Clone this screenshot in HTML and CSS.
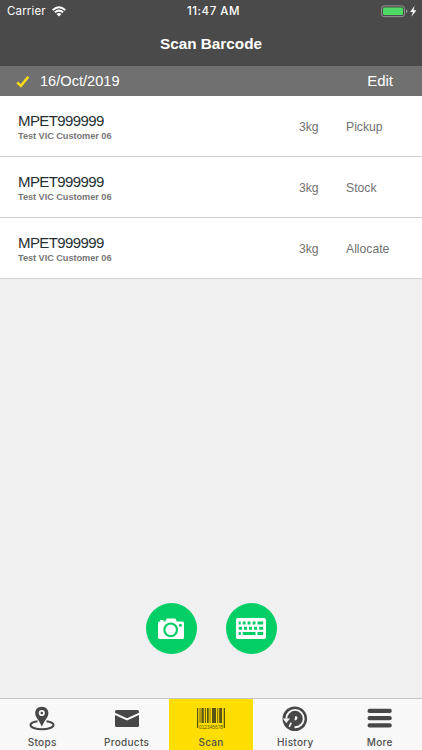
FILE: index.html
```html
<!DOCTYPE html>
<html lang="en">
<head>
<meta charset="utf-8">
<title>Scan Barcode</title>
<link rel="stylesheet" href="styles.css">
</head>
<body>
<div class="app">
  <header class="header">
    <div class="status">
      <div class="carrier"><span>Carrier</span>
        <svg width="14" height="11" viewBox="0 0 14 11" fill="#fff"><path d="M0 3.4Q7-3 14 3.4L12.7 4.8Q7-.4 1.3 4.8Z"/><path d="M2.2 5.7Q7 1.5 11.8 5.7L10.4 7.1Q7 4.2 3.6 7.1Z"/><path d="M4.5 8Q7 5.9 9.5 8L7 10.6Z"/></svg>
      </div>
      <div class="time">11:47 AM</div>
      <div class="battery">
        <svg width="36" height="13" viewBox="0 0 36 13"><rect x=".5" y=".9" width="23" height="10.7" rx="2.5" fill="none" stroke="#929292"/><rect x="2" y="2.4" width="20" height="7.7" rx="1" fill="#4cd964"/><path d="M25 4.5q1.5.3 1.5 1.8T25 8.1Z" fill="#929292"/><path d="M33.6.8L29.1 7H32L30.400 11.800L35.400 5.300H32.500Z" fill="#fff"/></svg>
      </div>
    </div>
    <h1 class="title">Scan Barcode</h1>
  </header>
  <div class="datebar">
    <svg class="check" width="14" height="13" viewBox="0 0 14 13"><path d="M1.200 7.300L4.900 10.900L12.300 1.700" fill="none" stroke="#fedd17" stroke-width="2.500"/></svg>
    <span class="date">16/Oct/2019</span>
    <span class="edit">Edit</span>
  </div>
  <main class="content">
    <ul class="list">
      <li class="row"><div class="item"><div class="code">MPET999999</div><div class="customer">Test VIC Customer 06</div></div><span class="weight">3kg</span><span class="kind">Pickup</span></li>
      <li class="row"><div class="item"><div class="code">MPET999999</div><div class="customer">Test VIC Customer 06</div></div><span class="weight">3kg</span><span class="kind">Stock</span></li>
      <li class="row"><div class="item"><div class="code">MPET999999</div><div class="customer">Test VIC Customer 06</div></div><span class="weight">3kg</span><span class="kind">Allocate</span></li>
    </ul>
    <div class="actions">
      <div class="round">
        <svg width="26" height="22" viewBox="0 0 26 22"><path d="M1.500 3.500H2.200V1.900H5.500V3.500H7.200L8.700.5H17.300L18.800 3.500H24.500Q26 3.500 26 5V19.500Q26 21 24.500 21H1.500Q0 21 0 19.500V5Q0 3.500 1.500 3.500Z" fill="#fff"/><circle cx="12.700" cy="11.800" r="6.300" fill="none" stroke="#04ce66" stroke-width="2.200"/><circle cx="22.400" cy="7.200" r="1.500" fill="#04ce66"/></svg>
      </div>
      <div class="round">
        <svg width="30" height="21" viewBox="0 0 30 21"><rect width="30" height="21" rx="1.800" fill="#fff"/><g fill="none" stroke="#04ce66" stroke-width="3"><path d="M2.700 4.900H4.800M6.700 4.900H9.600M11.600 4.900H14.500M16.600 4.900H19.500M21.500 4.900H27.200"/><path d="M2.700 10.200H6M8 10.200H11M13 10.200H16M18 10.200H21M23.200 10.200H27.200"/><path d="M2.700 15.500H4.800M6.700 15.500H19.500M21.500 15.500H27.200"/></g></svg>
      </div>
    </div>
  </main>
  <nav class="tabs">
    <div class="tab">
      <svg width="26" height="26" viewBox="0 0 26 26"><path d="M8.500 15.200C3.500 16 1.500 17.300 1.500 18.900C1.500 21.300 6.500 23.200 13 23.200S24.500 21.300 24.500 18.900C24.500 17.300 22.500 16 17.500 15.200" fill="none" stroke="#474747" stroke-width="2"/><path fill-rule="evenodd" d="M12.800.8C8.800.8 6.200 3.600 6.200 7.300C6.200 10.800 8.500 12.500 10.200 15.500L12.800 20.500L15.400 15.500C17.100 12.500 19.400 10.800 19.400 7.300C19.400 3.600 16.800.8 12.800.8ZM12.800 3.900A3.100 3.100 0 1 1 12.800 10.100A3.100 3.100 0 1 1 12.800 3.900Z" fill="#474747"/><circle cx="12.800" cy="7" r="1.300" fill="#474747"/></svg>
      <span>Stops</span>
    </div>
    <div class="tab">
      <svg width="26" height="26" viewBox="0 0 26 26" fill="#474747"><path d="M2.500 4H23.500Q25 4 25 5.500V6.800L13 12.200L1 6.800V5.500Q1 4 2.500 4Z"/><path d="M1 9L13 14.600L25 9V19.500Q25 21 23.500 21H2.500Q1 21 1 19.500Z"/></svg>
      <span>Products</span>
    </div>
    <div class="tab active">
      <svg width="30" height="26" viewBox="0 0 30 26"><path fill="#5c5417" d="M1 2h1.200v20H1zM3.600 2h.9v15h-.9zM5.500 2h2.300v15H5.500zM8.900 2h1v15h-1zM11 2h1.700v15H11zM13.700 2h.7v15h-.7zM16 2h4v15h-4zM21.300 2h.9v15h-.9zM23.200 2h2.800v15h-2.800zM27.700 2H29v20h-1.300z"/><text x="3" y="22.500" class="digits" textLength="24" lengthAdjust="spacingAndGlyphs">012345678</text></svg>
      <span>Scan</span>
    </div>
    <div class="tab">
      <svg width="26" height="26" viewBox="0 0 26 26" fill="none"><circle cx="12.800" cy="12.700" r="12.300" fill="#474747"/><path d="M4.300 12.700A8.700 8.700 0 1 1 12.500 21.300" stroke="#f8f8f8" stroke-width="1.900"/><path d="M.8 12.500H8L4.300 17.200Z" fill="#f8f8f8"/><path d="M9.300 16.600L7.200 20.800" stroke="#f8f8f8" stroke-width="1.600"/><path d="M13.100 10.300H14.200Q15.700 10.300 15.400 12Q15 14.500 12.500 14.500Z" fill="#f8f8f8"/></svg>
      <span>History</span>
    </div>
    <div class="tab">
      <svg width="26" height="26" viewBox="0 0 26 26"><path d="M2.600 4.900H22.700M2.600 12.200H22.700M2.600 19.400H22.700" stroke="#474747" stroke-width="4.200" stroke-linecap="round"/></svg>
      <span>More</span>
    </div>
  </nav>
</div>
</body>
</html>
```
FILE: styles.css
```css
* { box-sizing: border-box; }
body { margin: 0; font-family: "Liberation Sans", Arial, sans-serif; }
svg { display: block; flex: none; }
.app { width: 422px; height: 750px; display: flex; flex-direction: column; background: #f0f0f0; overflow: hidden; }
.header { height: 66px; background: #4a4a4a; color: #fff; }
.status { height: 22px; display: grid; grid-template-columns: 1fr auto 1fr; align-items: center; padding: 0 5px 0 7px; font: 500 11.5px/22px Inter, sans-serif; }
.carrier { display: flex; align-items: center; gap: 6px; font-weight: 400; letter-spacing: .15px; }
.time { letter-spacing: .5px; padding-left: 3px; }
.battery { justify-self: end; }
.title { margin: 0; height: 44px; font-size: 15.3px; line-height: 43px; font-weight: 700; text-align: center; }
.datebar { height: 30px; background: #707070; color: #fff; display: flex; align-items: center; padding: 0 29px 0 16px; }
.date { margin-left: 10px; font-size: 14.6px; line-height: 18px; padding-bottom: 1px; }
.edit { margin-left: auto; font-size: 15px; line-height: 18px; padding-bottom: 1px; }
.content { flex: 1; display: flex; flex-direction: column; justify-content: space-between; }
.list { list-style: none; margin: 0; padding: 0; }
.row { height: 61px; background: #fff; border-bottom: 1px solid #d1d1d1; display: flex; align-items: center; padding-left: 18px; font-size: 12.2px; color: #717171; }
.item { width: 281px; padding-top: 2px; }
.code { font-size: 15px; line-height: 17px; letter-spacing: -.6px; color: #263033; }
.customer { font-size: 9.2px; line-height: 14px; font-weight: 700; color: #777; letter-spacing: -.04px; }
.weight { width: 47px; padding-top: 1px; }
.kind { padding-top: 1px; }
.actions { display: flex; justify-content: center; gap: 29px; padding-bottom: 44px; }
.round { width: 51px; height: 51px; border-radius: 50%; background: #04ce66; display: flex; align-items: center; justify-content: center; }
.tabs { height: 52px; display: grid; grid-template-columns: repeat(5, 1fr); background: #f8f8f8; border-top: 1px solid #c6c6c6; }
.tab { display: flex; flex-direction: column; align-items: center; padding-top: 7px; color: #505050; font: 500 10px/14px Inter, sans-serif; letter-spacing: .3px; }
.tab span { margin-top: 3px; }
.active { background: #fedd00; }
.digits { font: 5.500px "Liberation Sans", sans-serif; fill: #5c5417; letter-spacing: 0; }
```
